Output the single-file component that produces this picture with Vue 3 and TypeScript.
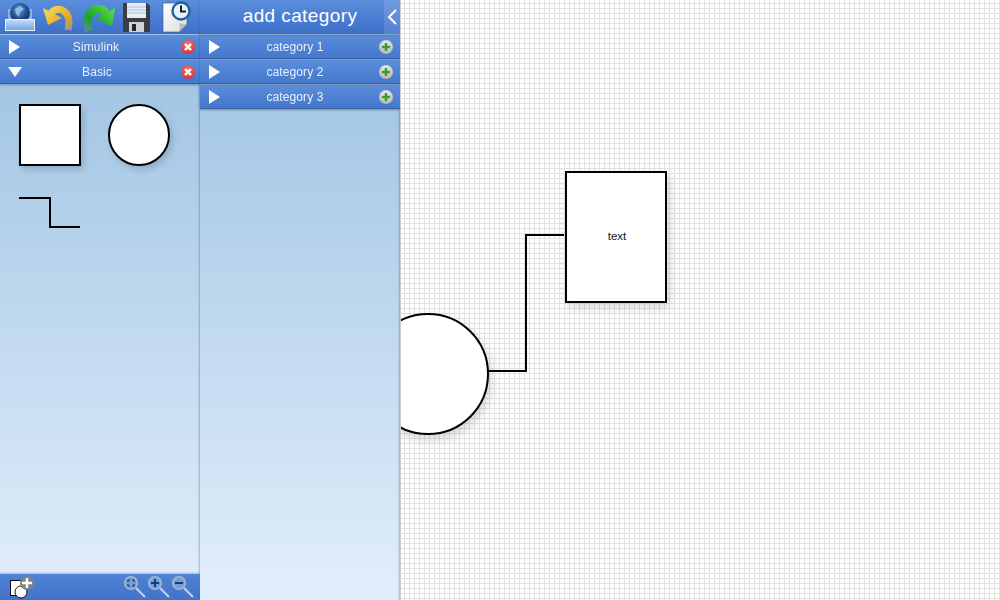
<script setup lang="ts">
const categories: string[] = ['category 1', 'category 2', 'category 3']
</script>

<template>
  <div class="app">
    <aside class="panel left">
      <header class="bar toolbar">
        <svg class="tool" width="32" height="34" viewBox="0 0 32 34">
          <defs>
            <radialGradient id="globe" cx="0.45" cy="0.35" r="0.7"><stop offset="0" stop-color="#5fa4de"/><stop offset="0.55" stop-color="#24508f"/><stop offset="1" stop-color="#14264f"/></radialGradient>
            <linearGradient id="tray" x1="0" y1="0" x2="0" y2="1"><stop offset="0" stop-color="#c4def8"/><stop offset="1" stop-color="#6fa3e6"/></linearGradient>
          </defs>
          <path d="M4 9h24v11H4z" fill="#8db0e0"/>
          <circle cx="16" cy="13" r="10" fill="url(#globe)"/>
          <path d="M11 9l5-3 4 3-4 3-1 5-3-3z" fill="#9fcfe8" opacity=".75"/>
          <rect x="1.5" y="19.5" width="29" height="11" fill="url(#tray)" stroke="#e6f2ff" stroke-width="1"/>
        </svg>
        <svg class="tool" width="32" height="34" viewBox="0 0 32 34">
          <defs><linearGradient id="und" gradientUnits="userSpaceOnUse" x1="4" y1="6" x2="28" y2="32"><stop offset="0" stop-color="#f8dd4c"/><stop offset=".65" stop-color="#e0a82a"/><stop offset="1" stop-color="#8a8fa0"/></linearGradient></defs>
          <path d="M8 13C14 5 30 10 25 30" fill="none" stroke="url(#und)" stroke-width="7"/>
          <path d="M0 8l5 17 14-7z" fill="url(#und)"/>
        </svg>
        <svg class="tool redo" width="32" height="34" viewBox="0 0 32 34">
          <defs><linearGradient id="red" gradientUnits="userSpaceOnUse" x1="28" y1="6" x2="4" y2="32"><stop offset="0" stop-color="#5ce044"/><stop offset=".65" stop-color="#18a528"/><stop offset="1" stop-color="#5a8a9a"/></linearGradient></defs>
          <path d="M23 13C17 5 0 9 6 31" fill="none" stroke="url(#red)" stroke-width="8.5"/>
          <path d="M32 8l-3 18-16-7z" fill="url(#red)"/>
        </svg>
        <svg class="tool" width="29" height="34" viewBox="0 0 29 34">
          <path d="M1 3h24l3 3v26H1z" fill="#3a3d44"/>
          <rect x="5" y="3" width="19" height="15" fill="#e8eef6"/>
          <path d="M5 7h19M5 10h19M5 13h19" stroke="#a9c2dc" stroke-width="1"/>
          <rect x="7" y="22" width="15" height="10" fill="#cfd2d6"/>
          <rect x="10" y="24" width="4" height="7" fill="#26282c"/>
        </svg>
        <svg class="tool page" width="30" height="34" viewBox="0 0 30 34">
          <defs><linearGradient id="pg" x1="0" y1="0" x2="1" y2="1"><stop offset="0" stop-color="#fff"/><stop offset="1" stop-color="#dcdcdc"/></linearGradient></defs>
          <path d="M1 3h24v21l-8 8H1z" fill="url(#pg)" stroke="#33518f" stroke-width=".6"/>
          <path d="M17 32c1-4 1-7 0-9 3 1 6 1 8 1z" fill="#bdbdbd"/>
          <circle cx="19" cy="11" r="8.5" fill="#e8f0fa" stroke="#1d5f9f" stroke-width="2.4"/>
          <path d="M19 5.5v6h5" fill="none" stroke="#15233d" stroke-width="2"/>
        </svg>
      </header>

      <div class="row">
        <span class="tri right"></span>
        <span class="label">Simulink</span>
        <svg class="badge" width="14" height="14" viewBox="0 0 14 14"><defs><radialGradient id="rb" cx=".5" cy=".35" r=".7"><stop offset="0" stop-color="#f27a7a"/><stop offset="1" stop-color="#d92c2c"/></radialGradient></defs><circle cx="7" cy="7" r="7" fill="url(#rb)"/><path d="M4 4l6 6M10 4l-6 6" stroke="#fff" stroke-width="2.4"/></svg>
      </div>
      <div class="row">
        <span class="tri down"></span>
        <span class="label">Basic</span>
        <svg class="badge" width="14" height="14" viewBox="0 0 14 14"><circle cx="7" cy="7" r="7" fill="url(#rb)"/><path d="M4 4l6 6M10 4l-6 6" stroke="#fff" stroke-width="2.4"/></svg>
      </div>

      <div class="shapes">
        <div class="shape square"></div>
        <div class="shape circle"></div>
        <svg class="step" width="62" height="32" viewBox="0 0 62 32"><path d="M0 1h31v29h30" fill="none" stroke="#000" stroke-width="2"/></svg>
      </div>

      <footer class="bar footer">
        <svg class="addshape" width="26" height="24" viewBox="0 0 26 24">
          <rect x="0.5" y="5.5" width="15" height="15" fill="#fff" stroke="#111" stroke-width="1"/>
          <circle cx="11" cy="17" r="6" fill="#fff" stroke="#111" stroke-width="1"/>
          <circle cx="17" cy="8" r="7" fill="#7b828e"/>
          <path d="M17 3v10M12 8h10" stroke="#fff" stroke-width="2.4"/>
        </svg>
        <span class="spacer"></span>
        <svg v-for="k in ['fit', 'in', 'out']" :key="k" class="zoom" width="24" height="24" viewBox="0 0 24 24">
          <path d="M12 13l9 9" stroke="#cfd2d6" stroke-width="2"/>
          <circle cx="7" cy="8" r="6.2" fill="#6f9fdc" stroke="#a7b8c8" stroke-width="1.6"/>
          <path v-if="k === 'in'" d="M7 4v8M3 8h8" stroke="#173a7a" stroke-width="2"/>
          <path v-if="k === 'out'" d="M3 8h8" stroke="#173a7a" stroke-width="2"/>
          <path v-if="k === 'fit'" d="M4 7V5h2M8 5h2v2M10 9v2H8M6 11H4V9" fill="none" stroke="#173a7a" stroke-width="1.2"/>
        </svg>
      </footer>
    </aside>

    <aside class="panel middle">
      <header class="bar title">
        <span class="title-text">add category</span>
        <span class="collapse">
          <svg width="10" height="16" viewBox="0 0 10 16"><path d="M9 1L2 8l7 7" fill="none" stroke="#fff" stroke-width="2"/></svg>
        </span>
      </header>
      <div v-for="c in categories" :key="c" class="row">
        <span class="tri right"></span>
        <span class="label">{{ c }}</span>
        <svg class="badge" width="14" height="14" viewBox="0 0 14 14"><defs><radialGradient id="gb" cx=".5" cy=".3" r=".8"><stop offset="0" stop-color="#f2f3ee"/><stop offset="1" stop-color="#a7aca4"/></radialGradient></defs><circle cx="7" cy="7" r="7" fill="url(#gb)"/><path d="M7 3v8M3 7h8" stroke="#3e9a30" stroke-width="2.6"/></svg>
      </div>
    </aside>

    <main class="canvas">
      <svg class="diagram" width="599" height="600" viewBox="401 0 599 600">
        <defs><filter id="sh" x="-20%" y="-20%" width="150%" height="150%"><feDropShadow dx="3" dy="5" stdDeviation="5" flood-color="#000" flood-opacity=".14"/></filter></defs>
        <path d="M488 371h38V235h38" fill="none" stroke="#000" stroke-width="2"/>
        <circle cx="428" cy="374" r="60" fill="#fff" stroke="#000" stroke-width="2" filter="url(#sh)"/>
        <rect x="566" y="172" width="100" height="130" fill="#fff" stroke="#000" stroke-width="2" filter="url(#sh)"/>
        <text x="617" y="240" text-anchor="middle" class="node-text">text</text>
      </svg>
    </main>
  </div>
</template>

<style>
body { margin: 0; overflow: hidden; }
</style>

<style scoped>
.app {
  display: flex;
  width: 1000px;
  height: 600px;
  overflow: hidden;
  font-family: "Liberation Sans", Arial, sans-serif;
}
.panel {
  position: relative;
  display: flex;
  flex-direction: column;
  flex: 0 0 200px;
  width: 200px;
  height: 600px;
  background: linear-gradient(#a3c6e4 14%, #e2eefb);
  box-shadow: inset -2px 0 2px -1px rgba(60, 70, 90, .35);
}
.bar {
  display: flex;
  align-items: center;
  flex: none;
  background: linear-gradient(#5a8edb, #3d6fc9);
}
.toolbar {
  height: 34px;
  gap: 7px;
  padding-left: 4px;
  box-sizing: border-box;
  overflow: hidden;
}
.tool { flex: none; }
.redo { margin-left: 1px; }
.page { margin-left: 4px; }
.row {
  display: flex;
  align-items: center;
  flex: none;
  height: 24px;
  margin-top: 1px;
  padding: 0 5px 0 9px;
  box-sizing: border-box;
  background: linear-gradient(#5b8ddb, #4478cd);
  border-bottom: 1px solid #3a5f9f;
  box-shadow: 0 1px 2px rgba(30, 50, 90, .4);
  color: #fff;
  font-size: 12px;
}
.middle .row { padding-right: 7px; }
.label { flex: 1; margin-right: 9px; text-align: center; opacity: .88; letter-spacing: .12px; }
.tri { display: block; width: 0; height: 0; flex: none; }
.tri.right {
  border-left: 11px solid #fff;
  border-top: 7px solid transparent;
  border-bottom: 7px solid transparent;
}
.tri.down {
  margin-left: -1px;
  border-top: 10px solid #fff;
  border-left: 7.5px solid transparent;
  border-right: 7.5px solid transparent;
}
.badge { flex: none; }
.shapes {
  display: grid;
  grid-template-columns: 62px 62px;
  column-gap: 27px;
  row-gap: 31px;
  padding: 20px 0 0 19px;
  flex: 1;
  align-content: start;
}
.shape {
  width: 62px;
  height: 62px;
  box-sizing: border-box;
  background: #fff;
  border: 2px solid #000;
  box-shadow: 3px 4px 6px rgba(40, 60, 90, .2);
}
.circle { border-radius: 50%; }
.footer {
  height: 26px;
  padding: 0 4px 0 10px;
  box-sizing: border-box;
  box-shadow: 0 -1px 2px rgba(30, 50, 90, .3);
  background: linear-gradient(#4f83d6, #4273c9);
}
.spacer { flex: 1; }
.zoom { flex: none; }
.addshape { flex: none; }
.title {
  position: relative;
  height: 34px;
  padding-bottom: 3px;
  box-sizing: border-box;
  justify-content: center;
  box-shadow: 0 1px 2px rgba(30, 50, 90, .3);
}
.title-text { color: #fff; font-size: 19px; letter-spacing: .4px; }
.collapse {
  position: absolute;
  right: 0;
  top: 0;
  width: 16px;
  height: 34px;
  display: flex;
  align-items: center;
  justify-content: center;
  background: rgba(255, 255, 255, .12);
}
.canvas {
  position: relative;
  flex: 1;
  height: 600px;
  background-color: #fff;
  background-image:
    linear-gradient(#e2e2e2 1px, transparent 1px),
    linear-gradient(90deg, #e2e2e2 1px, transparent 1px);
  background-size: 5px 5px;
  background-position: 3px 3px;
  border-left: 1px solid #c9ccd0;
  box-sizing: border-box;
}
.diagram { display: block; }
.node-text { font-family: "Liberation Sans", Arial, sans-serif; font-size: 11.5px; fill: #111; }
</style>
